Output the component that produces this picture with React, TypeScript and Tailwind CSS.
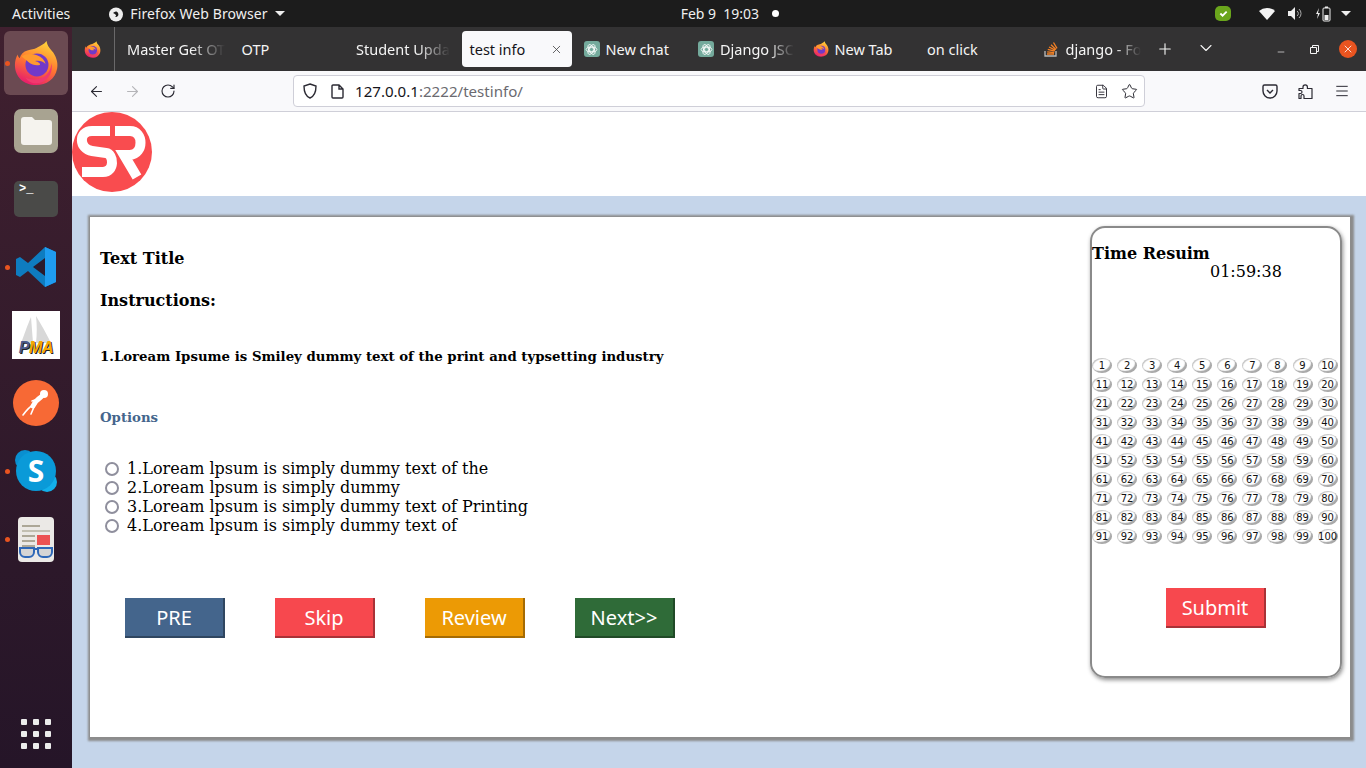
import React from 'react';
import { ArrowLeft, ArrowRight, RotateCw, Plus, ChevronDown, X, Minus, Star, Menu, FileText } from 'lucide-react';

const serif = { fontFamily: '"DejaVu Serif", serif' };

const FirefoxIcon = ({ size }: { size: number }) => (
  <svg width={size} height={size} viewBox="0 0 48 48">
    <defs>
      <linearGradient id="ffa" x1="0.7" y1="0" x2="0.3" y2="1">
        <stop offset="0" stopColor="#ffd43a" />
        <stop offset="0.5" stopColor="#ff7a2f" />
        <stop offset="1" stopColor="#e6186f" />
      </linearGradient>
    </defs>
    <path d="M35 1c1 6 4 8 7 12 4 6 5 12 4 17-2 11-11 17-22 17C11 47 2 38 2 26c0-4 1-8 3-11 0 2 1 3 2 4 1-4 4-7 8-8 4-2 7-1 10-3 3-2 7-3 10-7z" fill="url(#ffa)" />
    <circle cx="25" cy="26" r="12" fill="#7139c9" />
    <path d="M9 17c5-3 11-3 16-1 5 2 8 5 9 9-3-3-7-4-11-3 4 1 6 3 5 4-4 1-8 0-12-3-2-2-5-4-7-6z" fill="#ff9a2e" />
    <path d="M13 39c6 3 14 3 20-1 5-4 7-9 7-14 2 8-2 17-10 20-7 3-14 0-17-5z" fill="#f03a6f" />
  </svg>
);

const ChatIcon = () => (
  <span className="flex h-4 w-4 items-center justify-center rounded-[3px] bg-[#74aa9c]">
    <svg width="13" height="13" viewBox="0 0 24 24" fill="none" stroke="#fff" strokeWidth="1.5">
      <circle cx="12" cy="12" r="4" />
      <ellipse cx="12" cy="12" rx="10" ry="5" />
      <ellipse cx="12" cy="12" rx="10" ry="5" transform="rotate(60 12 12)" />
      <ellipse cx="12" cy="12" rx="10" ry="5" transform="rotate(120 12 12)" />
    </svg>
  </span>
);

const StackIcon = () => (
  <svg width="14" height="16" viewBox="0 0 14 16" fill="none" strokeWidth="1.3">
    <path d="M1 10v5h11v-5" stroke="#bcbbbb" />
    <path d="M3 13h7M3.2 10.8l7 .8M3.8 8.4l6.800 1.800M5 6l6.200 3.200M7 3.800l5 4.600M9.500 1.500l3.500 5.800" stroke="#f48024" />
  </svg>
);

const Tab = ({ icon, label, fade }: { icon?: React.ReactNode; label: string; fade?: boolean }) => (
  <div className="flex h-full w-[114.5px] shrink-0 items-center gap-[6px] pl-3">
    {icon}
    <span
      className={`whitespace-nowrap pt-[2px] text-[14.5px] text-[#f5f5f5] ${
        fade ? '[mask-image:linear-gradient(to_right,#000_65%,transparent_100%)]' : ''
      }`}
    >
      {label}
    </span>
  </div>
);

const DockItem = ({ running, children }: { running?: boolean; children: React.ReactNode }) => (
  <div className="relative flex h-[68px] w-[72px] items-center justify-center">
    {running && <span className="absolute left-[5px] top-[32px] h-[5px] w-[5px] rounded-full bg-[#e95420]" />}
    {children}
  </div>
);

const Dock = () => (
  <aside className="flex h-full w-[72px] shrink-0 flex-col bg-gradient-to-b from-[#40202f] to-[#251528]">
    <div className="pt-[2px]">
      <DockItem running>
        <div className="flex h-[64px] w-[64px] items-center justify-center rounded-[6px] bg-[#6b4a52]">
          <FirefoxIcon size={46} />
        </div>
      </DockItem>
      <DockItem>
        <div className="flex h-[44px] w-[44px] items-center justify-center rounded-[7px] bg-[#a8a391]">
          <svg width="34" height="30" viewBox="0 0 34 30">
            <path d="M2 4a3 3 0 0 1 3-3h8l3 3h14a3 3 0 0 1 3 3v19a3 3 0 0 1-3 3H5a3 3 0 0 1-3-3z" fill="#f5f3ee" />
          </svg>
        </div>
      </DockItem>
      <DockItem>
        <div className="h-[36px] w-[44px] rounded-[5px] bg-[#4a4a48] pl-[5px] pt-[1px] font-['Liberation_Mono',monospace] text-[12px] font-bold leading-[14px] text-white">
          {'>_'}
        </div>
      </DockItem>
      <DockItem running>
        <svg width="42" height="42" viewBox="0 0 42 42">
          <path d="M30 1L13 17 5 11l-4 2v16l4 2 8-6 17 16 11-5V6z" fill="#0e7cc0" />
          <path d="M30 1l11 5v30l-11 5z" fill="#1f9cf0" />
          <path d="M30 12L18 21l12 9z" fill="#2b1a2c" />
        </svg>
      </DockItem>
      <DockItem>
        <div className="flex h-[48px] w-[48px] flex-col items-center justify-end bg-white">
          <svg width="36" height="28" viewBox="0 0 36 28">
            <path d="M13 1C9 10 6 20 3 27h12zM18 0c1 9 1 18 0 27h15C28 17 23 8 18 0z" fill="#d8d8d8" />
          </svg>
          <span className="mb-[3px] -mt-[4px] font-['Liberation_Sans',sans-serif] text-[16px] font-bold italic leading-[16px] tracking-tight text-[#f6a800] [text-shadow:1px_1px_0_#222]">
            <span className="text-[#4a5a8c]">P</span>MA
          </span>
        </div>
      </DockItem>
      <DockItem>
        <div className="flex h-[46px] w-[46px] items-center justify-center rounded-full bg-[#f76935]">
          <svg width="36" height="36" viewBox="0 0 36 36" fill="none" stroke="#fff" strokeLinecap="round">
            <circle cx="26" cy="9" r="4" fill="#fff" stroke="none" />
            <path d="M23 12c-3 2-6 5-8 9" strokeWidth="5" />
            <path d="M15 20c-4 2-7 6-10 10M16 22l-3 7M20 14l-6 2" strokeWidth="1.6" />
          </svg>
        </div>
      </DockItem>
      <DockItem running>
        <div className="relative flex h-[42px] w-[42px] items-center justify-center">
          <span className="absolute left-0 top-0 h-[20px] w-[20px] rounded-full bg-[#0a8fd0]" />
          <span className="absolute bottom-0 right-0 h-[20px] w-[20px] rounded-full bg-[#12b0ea]" />
          <span className="absolute inset-[1px] rounded-full bg-[#0a9ad8]" />
          <span className="relative font-['Open_Sans',sans-serif] text-[30px] font-bold leading-none text-white">S</span>
        </div>
      </DockItem>
      <DockItem running>
        <div className="relative h-[45px] w-[36px] rounded-[4px] bg-[#ebe9e6] px-1 pt-[8px]">
          <div className="mb-[3px] h-[2px] w-[18px] bg-[#aca797]" />
          <div className="mb-[3px] h-[2px] w-full bg-[#c2bfb2]" />
          <div className="flex gap-[2px]">
            <div className="flex-1">
              <div className="mb-[3px] h-[2px] bg-[#aca797]" />
              <div className="mb-[3px] h-[2px] bg-[#aca797]" />
              <div className="h-[2px] bg-[#aca797]" />
            </div>
            <div className="h-[10px] w-[13px] bg-[#ec5252]" />
          </div>
          <svg className="absolute bottom-[3px] left-[1px]" width="34" height="13" viewBox="0 0 34 13" fill="#d5d5d5" stroke="#2e68b8" strokeWidth="2">
            <path d="M1 2h14v4a5 5 0 0 1-5 5H6a5 5 0 0 1-5-5zM19 2h14v4a5 5 0 0 1-5 5h-4a5 5 0 0 1-5-5zM15 3h4" />
          </svg>
        </div>
      </DockItem>
    </div>
    <div className="mx-auto mt-auto grid w-[30px] grid-cols-3 gap-[6px] pb-[19px]">
      {Array.from({ length: 9 }).map((_, i) => (
        <span key={i} className="h-[6px] w-[6px] rounded-[1px] bg-[#ececec]" />
      ))}
    </div>
  </aside>
);

const TopBar = () => (
  <header className="flex h-[27px] shrink-0 items-center bg-[#1c1c1c] font-['Noto_Sans',sans-serif] text-[14px] text-[#f0f0f0]">
    <span className="pl-3">Activities</span>
    <div className="ml-[38px] flex items-center gap-[6px]">
      <svg width="16" height="16" viewBox="0 0 16 16">
        <circle cx="8" cy="8.500" r="7" fill="#eee" />
        <path d="M5 7c2-2 4-2 5 0 1 2 0 4-3 4 2-1 1-3-2-4z" fill="#1c1c1c" />
      </svg>
      <span className="tracking-[0.1px]">Firefox Web Browser</span>
      <span className="ml-[1px] h-0 w-0 border-x-[5px] border-t-[5px] border-x-transparent border-t-[#eee]" />
    </div>
    <div className="ml-[396px] flex items-center">
      <span>Feb 9&nbsp;&nbsp;19:03</span>
      <span className="ml-[13px] h-[7px] w-[7px] rounded-full bg-white" />
    </div>
    <div className="ml-auto flex items-center pr-[15px]">
      <span className="flex h-[15px] w-[16px] items-center justify-center rounded-[5px] bg-[#6aa51c]">
        <svg width="9" height="9" viewBox="0 0 10 10" fill="none" stroke="#fff" strokeWidth="2">
          <path d="M1.500 5l2.500 2.500 4.500-4.500" />
        </svg>
      </span>
      <svg className="ml-[28px]" width="16" height="13" viewBox="0 0 16 13">
        <path d="M0 4a12 12 0 0 1 16 0l-8 9z" fill="#f4f4f4" />
      </svg>
      <svg className="ml-[13px]" width="15" height="13" viewBox="0 0 15 13" fill="none">
        <path d="M0 4h3l4-4v13l-4-4H0z" fill="#eee" />
        <path d="M9 4a3 3 0 0 1 0 5M11 2a6 6 0 0 1 0 9" stroke="#aaa" strokeWidth="1" />
      </svg>
      <svg className="ml-[13px]" width="15" height="16" viewBox="0 0 15 16" fill="none">
        <path d="M3 2L0 8h2l-1 5 3-6H2z" fill="#eee" />
        <rect x="7" y="2" width="7" height="13" rx="1" stroke="#eee" />
        <rect x="8.500" y="9" width="4" height="5" fill="#eee" />
        <rect x="9" y="0.500" width="3" height="1.500" fill="#eee" />
      </svg>
      <span className="ml-[10px] h-0 w-0 border-x-[5px] border-t-[5px] border-x-transparent border-t-[#eee]" />
    </div>
  </header>
);

const TabBar = () => (
  <div className="flex h-[44px] shrink-0 items-center bg-[#333233] font-['Noto_Sans',sans-serif]">
    <div className="flex h-full w-[43px] shrink-0 items-center border-r border-[#6a696a] pl-[12px]">
      <FirefoxIcon size={17} />
    </div>
    <Tab label="Master Get OT" fade />
    <Tab label="OTP" />
    <Tab label="Student Upda" fade />
    <div className="ml-[3px] flex h-[36px] w-[110px] shrink-0 items-center justify-between rounded-[4px] bg-[#f9f9fb] pl-2 pr-[9px] text-[14.5px] text-[#15141a]">
      <span className="pt-[2px]">test info</span>
      <X size={13} strokeWidth={1.5} className="text-[#444]" />
    </div>
    <Tab icon={<ChatIcon />} label="New chat" />
    <Tab icon={<ChatIcon />} label="Django JSC" fade />
    <Tab icon={<FirefoxIcon size={16} />} label="New Tab" />
    <Tab label="on click" />
    <div className="ml-[2px]">
      <div className="flex h-[44px] w-[114.5px] items-center gap-[8px] pl-3">
        <StackIcon />
        <span className="whitespace-nowrap pt-[2px] text-[14.5px] text-[#f5f5f5] [mask-image:linear-gradient(to_right,#000_65%,transparent_100%)]">
          django - Fo
        </span>
      </div>
    </div>
    <Plus size={18} strokeWidth={1.5} className="ml-[10px] shrink-0 text-[#f5f5f5]" />
    <ChevronDown size={20} strokeWidth={1.3} className="ml-[22px] -mt-[2px] shrink-0 text-[#f5f5f5]" />
    <Minus size={10} strokeWidth={1.6} className="ml-[60px] mt-[5px] shrink-0 text-[#f5f5f5]" />
    <svg className="ml-[24px] shrink-0" width="9" height="9" viewBox="0 0 9 9" fill="none" stroke="#f5f5f5">
      <path d="M.5 2.500h6v6h-6zM2.500 2.500v-2h6v6h-2" />
    </svg>
    <span className="ml-[20px] flex h-[18px] w-[18px] shrink-0 items-center justify-center rounded-full bg-[#e95420]">
      <X size={12} strokeWidth={1.6} className="text-white" />
    </span>
  </div>
);

const NavBar = () => (
  <div className="flex h-[41px] shrink-0 items-center border-b border-[#cfcfd8] bg-[#f9f9fb] text-[#2b2a33]">
    <ArrowLeft size={17} strokeWidth={1.5} className="ml-[16px]" />
    <ArrowRight size={17} strokeWidth={1.5} className="ml-[19px] text-[#b5b5b8]" />
    <RotateCw size={16} strokeWidth={1.7} className="ml-[19px]" />
    <div className="ml-[117px] flex h-[32px] w-[852px] items-center rounded-[4px] border border-[#cfcfd8] bg-white">
      <svg className="ml-[8px]" width="16" height="16" viewBox="0 0 16 16" fill="none" stroke="#2b2a33" strokeWidth="1.4">
        <path d="M8 1l6 2c0 6-1 10-6 12C3 13 2 9 2 3z" />
      </svg>
      <svg className="ml-[13px]" width="13" height="15" viewBox="0 0 13 15" fill="none" stroke="#2b2a33" strokeWidth="1.4">
        <path d="M2 1h6l4 4v8a1 1 0 0 1-1 1H2a1 1 0 0 1-1-1V2a1 1 0 0 1 1-1zM8 1v4h4" />
      </svg>
      <span className="ml-[11px] font-['Noto_Sans',sans-serif] text-[15.1px] text-[#15141a]">
        127.0.0.1<span className="text-[#6b6a70]">:2222/testinfo/</span>
      </span>
      <FileText size={15} strokeWidth={1.5} className="ml-auto" />
      <Star size={17} strokeWidth={1.4} className="ml-[12px] mr-[6px]" />
    </div>
    <svg className="ml-[117px]" width="16" height="15" viewBox="0 0 16 15" fill="none" stroke="#2b2a33" strokeWidth="1.4">
      <path d="M2.500 1h11A1.500 1.500 0 0 1 15 2.500V7a7 7 0 0 1-14 0V2.500A1.500 1.500 0 0 1 2.500 1zM5 6l3 3 3-3" />
    </svg>
    <svg className="ml-[20px]" width="16" height="17" viewBox="0 0 16 17" fill="none" stroke="#2b2a33" strokeWidth="1.2" strokeLinejoin="round">
      <path d="M1 5.500h4V4a2.200 2.200 0 0 1 4.400 0v1.500H14V15.500H6v-2.500a1.500 1.500 0 0 0-3 0v2.500H1v-5h1.500a1.500 1.500 0 0 0 0-3H1z" />
    </svg>
    <Menu size={16} strokeWidth={1.5} className="ml-[20px]" />
  </div>
);

const ActionButton = ({ label, color, edge }: { label: string; color: string; edge: string }) => (
  <button className={`h-[40px] w-[100px] border-b-2 border-r-2 pt-[1px] font-['Noto_Sans',sans-serif] text-[20px] text-white ${color} ${edge}`}>
    {label}
  </button>
);

const options = [
  '1.Loream lpsum is simply dummy text of the',
  '2.Loream lpsum is simply dummy',
  '3.Loream lpsum is simply dummy text of Printing',
  '4.Loream lpsum is simply dummy text of',
];

const QuestionPanel = () => (
  <section className="flex-1 pl-[10px] pt-[32px] text-black">
    <h2 className="text-[16px] font-bold leading-[20px]">Text Title</h2>
    <h2 className="mt-[22px] text-[16px] font-bold leading-[20px]">Instructions:</h2>
    <p className="mt-[37px] text-[13.3px] font-bold leading-[18px]">
      1.Loream Ipsume is Smiley dummy text of the print and typsetting industry
    </p>
    <p className="mt-[43px] text-[13.3px] font-bold leading-[18px] text-[#44658c]">Options</p>
    <div className="mt-[32px] pl-[5px]">
      {options.map((o) => (
        <label key={o} className="flex h-[19px] items-center text-[16px]">
          <span className="mr-[8px] h-[14px] w-[14px] rounded-full border-2 border-[#8f8f9d] bg-white" />
          {o}
        </label>
      ))}
    </div>
    <div className="ml-[25px] mt-[63px] flex gap-[50px]">
      <ActionButton label="PRE" color="bg-[#44658c]" edge="border-[#2f4660]" />
      <ActionButton label="Skip" color="bg-[#f7484e]" edge="border-[#a93237]" />
      <ActionButton label="Review" color="bg-[#ec9a05]" edge="border-[#a56b03]" />
      <ActionButton label="Next>>" color="bg-[#2f6b38]" edge="border-[#204a27]" />
    </div>
  </section>
);

const TimerPanel = () => (
  <aside className="mr-[8px] mt-[9px] h-[452px] w-[252px] shrink-0 rounded-[15px] border-2 border-[#8a8a8a] shadow-[1px_2px_4px_rgba(0,0,0,0.45)]">
    <h3 className="pt-[16px] text-[16px] font-bold leading-[20px] text-black">Time Resuim</h3>
    <p className="pl-[118px] text-[16px] leading-[16px] text-black">01:59:38</p>
    <div className="mt-[78px] grid grid-cols-[repeat(10,25.07px)] gap-y-[4px]">
      {Array.from({ length: 100 }).map((_, i) => (
        <span
          key={i}
          className="flex h-[15px] w-[20px] items-center justify-center whitespace-nowrap rounded-[50%] bg-white font-['DejaVu_Sans',sans-serif] text-[10px] leading-none text-[#111] shadow-[inset_-2px_-2px_1px_#a8a8a8,inset_1px_1px_1px_#c4c4c4]"
        >
          {i + 1}
        </span>
      ))}
    </div>
    <div className="mt-[44px] flex justify-center">
      <ActionButton label="Submit" color="bg-[#f7484e]" edge="border-[#a93237]" />
    </div>
  </aside>
);

export default function App() {
  return (
    <div className="flex h-[768px] w-[1366px] flex-col overflow-hidden">
      <TopBar />
      <div className="flex min-h-0 flex-1">
        <Dock />
        <div className="flex min-w-0 flex-1 flex-col">
          <TabBar />
          <NavBar />
          <div className="h-[84px] shrink-0 bg-white">
            <svg width="80" height="80" viewBox="0 0 80 80">
              <circle cx="40" cy="40" r="40" fill="#f94c4f" />
              <path d="M38 19H20c-14 0-13 18 0 20l14 2c8 1 9 19-3 19H10" fill="none" stroke="#fff" strokeWidth="10" />
              <path d="M43 19h15c14 0 14 23 0 24h-6l13 22" fill="none" stroke="#fff" strokeWidth="10" />
            </svg>
          </div>
          <main className="flex-1 bg-[#c5d5ea] pl-[18px] pr-[16px] pt-[21px]" style={serif}>
            <div className="flex h-[520px] bg-white shadow-[1px_1px_2px_3px_#8c8c8c]">
              <QuestionPanel />
              <TimerPanel />
            </div>
          </main>
        </div>
      </div>
    </div>
  );
}
